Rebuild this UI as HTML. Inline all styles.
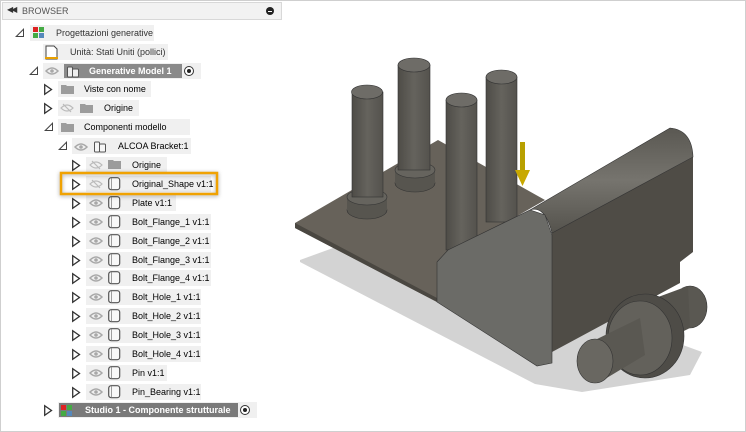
<!DOCTYPE html>
<html><head><meta charset="utf-8"><style>
*{margin:0;padding:0;box-sizing:border-box}
body{width:746px;height:432px;background:#fff;position:relative;overflow:hidden;font-family:"Liberation Sans",sans-serif;font-size:9px;color:#333}
#frame{position:absolute;left:0;top:0;width:746px;height:432px;border:1px solid #cfcfcf}
#hdr{position:absolute;left:2px;top:2px;width:280px;height:18px;background:#f2f2f2;border:1px solid #d8d8d8}
</style></head><body>
<div id="frame"></div>
<div id="hdr">
 <span style="position:absolute;left:4px;top:2px;font-size:8px;color:#333;letter-spacing:-2px">◀◀</span>
 <span style="position:absolute;left:19px;top:3px;font-size:9px;color:#555">BROWSER</span>
 <span style="position:absolute;left:263px;top:4px;width:8px;height:8px;border-radius:50%;background:#222"></span>
 <span style="position:absolute;left:265px;top:7.5px;width:4px;height:1px;background:#fff"></span>
</div>

<svg width="746" height="432" style="position:absolute;left:0;top:0" font-family="Liberation Sans" font-size="9">
<defs>
<linearGradient id="cyl" x1="0" x2="1" y1="0" y2="0"><stop offset="0" stop-color="#4e4c47"/><stop offset="0.5" stop-color="#65635d"/><stop offset="1" stop-color="#54524d"/></linearGradient>
<linearGradient id="topr" x1="0" x2="0" y1="0" y2="1"><stop offset="0" stop-color="#5a5852"/><stop offset="0.5" stop-color="#76746e"/><stop offset="1" stop-color="#55534d"/></linearGradient>
<g id="open"><path d="M0 9 L9 0 L9 9 Z" fill="#444"/><path d="M2.5 8 L8 2.5 L8 8Z" fill="#fff"/></g>
<g id="closed"><path d="M0.7 0.7 L0.7 10.3 L7.5 5.5 Z" fill="#fff" stroke="#333" stroke-width="1.3"/></g>
<g id="eye"><path d="M0 4 Q6 -2 12 4 Q6 10 0 4Z" fill="none" stroke="#a8a8a8" stroke-width="1.5"/><circle cx="6" cy="4" r="1.8" fill="#a8a8a8"/></g>
<g id="eyex"><path d="M0 4 Q6 -2 12 4 Q6 10 0 4Z" fill="none" stroke="#bbb" stroke-width="1.2"/><line x1="2" y1="0" x2="10" y2="8" stroke="#bbb" stroke-width="1.2"/></g>
<g id="fold"><path d="M0 1 H5 L6 2 H13 V10 H0Z" fill="#9c9c9c"/></g>
<g id="comp"><rect x="0.7" y="0.7" width="11" height="12" rx="2.5" fill="#f8f8f8" stroke="#555" stroke-width="1.2"/><path d="M3.5 1 V12.5" stroke="#888" stroke-width="0.8"/></g>
<g id="gen"><rect x="0" y="0" width="5" height="5" fill="#d22"/><rect x="6" y="0" width="5" height="5" fill="#4a4"/><rect x="0" y="6" width="5" height="5" fill="#4a4"/><rect x="6" y="6" width="5" height="5" fill="#58b"/></g>
<g id="radio"><circle cx="5" cy="5" r="4.5" fill="#fff" stroke="#333" stroke-width="1"/><circle cx="5" cy="5" r="2" fill="#222"/></g>
</defs>

<g fill="#f0f0f0">
<rect x="30" y="25" width="124" height="16"/>
<rect x="43" y="44" width="125" height="16"/>
<rect x="43" y="63" width="158" height="16"/>
<rect x="58" y="81" width="93" height="16"/>
<rect x="58" y="100" width="81" height="16"/>
<rect x="58" y="119" width="132" height="16"/>
<rect x="72" y="138" width="119" height="16"/>
<rect x="86" y="157" width="81" height="16"/>
<rect x="86" y="176" width="125" height="16"/>
<rect x="86" y="195" width="90" height="16"/>
<rect x="86" y="214" width="125" height="16"/>
<rect x="86" y="233" width="125" height="16"/>
<rect x="86" y="252" width="125" height="16"/>
<rect x="86" y="270" width="125" height="16"/>
<rect x="86" y="289" width="115" height="16"/>
<rect x="86" y="308" width="115" height="16"/>
<rect x="86" y="327" width="115" height="16"/>
<rect x="86" y="346" width="115" height="16"/>
<rect x="86" y="365" width="81" height="16"/>
<rect x="86" y="384" width="115" height="16"/>
<rect x="58" y="402" width="199" height="16"/>
</g>

<use href="#open" x="15" y="28"/><use href="#gen" x="33" y="27"/>
<text x="56" y="36" fill="#333">Progettazioni generative</text>
<path d="M46 46 H54 L57 49 V59 H46Z" fill="#fff" stroke="#444" stroke-width="1"/><rect x="45" y="57" width="13" height="2" fill="#e8a000"/>
<text x="70" y="55" fill="#333">Unità: Stati Uniti (pollici)</text>
<use href="#open" x="29" y="66"/><use href="#eye" x="46" y="67"/>
<rect x="64" y="64" width="118" height="14" fill="#8a8a8a"/>
<g transform="translate(67,65)"><rect x="0.5" y="2" width="5" height="10" rx="1" fill="#eee" stroke="#555"/><rect x="5.5" y="4" width="6" height="8" rx="1" fill="#eee" stroke="#555"/></g>
<text x="89" y="74" fill="#fff" font-weight="bold">Generative Model 1</text>
<use href="#radio" x="184" y="66"/>
<use href="#closed" x="44" y="84"/><use href="#fold" x="61" y="84"/>
<text x="84" y="92">Viste con nome</text>
<use href="#closed" x="44" y="103"/><use href="#eyex" x="61" y="104"/><use href="#fold" x="80" y="103"/>
<text x="104" y="111">Origine</text>
<use href="#open" x="44" y="122"/><use href="#fold" x="61" y="122"/>
<text x="84" y="130">Componenti modello</text>
<use href="#open" x="58" y="141"/><use href="#eye" x="75" y="143"/>
<g transform="translate(94,140)"><rect x="0.5" y="2" width="5" height="10" rx="1" fill="#f6f6f6" stroke="#555"/><rect x="5.5" y="4" width="6" height="8" rx="1" fill="#f6f6f6" stroke="#555"/></g>
<text x="118" y="149">ALCOA Bracket:1</text>
<use href="#closed" x="72" y="160"/><use href="#eyex" x="90" y="161"/><use href="#fold" x="108" y="159"/>
<text x="132" y="168">Origine</text>

<use href="#closed" x="72" y="179"/><use href="#eyex" x="90" y="180"/><use href="#comp" x="108" y="177"/><text x="132" y="187">Original_Shape v1:1</text>
<use href="#closed" x="72" y="198"/><use href="#eye" x="90" y="199"/><use href="#comp" x="108" y="196"/><text x="132" y="206">Plate v1:1</text>
<use href="#closed" x="72" y="217"/><use href="#eye" x="90" y="218"/><use href="#comp" x="108" y="215"/><text x="132" y="225">Bolt_Flange_1 v1:1</text>
<use href="#closed" x="72" y="236"/><use href="#eye" x="90" y="237"/><use href="#comp" x="108" y="234"/><text x="132" y="244">Bolt_Flange_2 v1:1</text>
<use href="#closed" x="72" y="255"/><use href="#eye" x="90" y="256"/><use href="#comp" x="108" y="253"/><text x="132" y="263">Bolt_Flange_3 v1:1</text>
<use href="#closed" x="72" y="273"/><use href="#eye" x="90" y="274"/><use href="#comp" x="108" y="271"/><text x="132" y="281">Bolt_Flange_4 v1:1</text>
<use href="#closed" x="72" y="292"/><use href="#eye" x="90" y="293"/><use href="#comp" x="108" y="290"/><text x="132" y="300">Bolt_Hole_1 v1:1</text>
<use href="#closed" x="72" y="311"/><use href="#eye" x="90" y="312"/><use href="#comp" x="108" y="309"/><text x="132" y="319">Bolt_Hole_2 v1:1</text>
<use href="#closed" x="72" y="330"/><use href="#eye" x="90" y="331"/><use href="#comp" x="108" y="328"/><text x="132" y="338">Bolt_Hole_3 v1:1</text>
<use href="#closed" x="72" y="349"/><use href="#eye" x="90" y="350"/><use href="#comp" x="108" y="347"/><text x="132" y="357">Bolt_Hole_4 v1:1</text>
<use href="#closed" x="72" y="368"/><use href="#eye" x="90" y="369"/><use href="#comp" x="108" y="366"/><text x="132" y="376">Pin v1:1</text>
<use href="#closed" x="72" y="387"/><use href="#eye" x="90" y="388"/><use href="#comp" x="108" y="385"/><text x="132" y="395">Pin_Bearing v1:1</text>
<use href="#closed" x="44" y="405"/>
<rect x="59" y="403" width="179" height="14" fill="#7a7a7a"/>
<use href="#gen" x="61" y="405"/>
<text x="85" y="413" fill="#fff" font-weight="bold">Studio 1 - Componente strutturale</text>
<use href="#radio" x="240" y="405"/>

<rect x="61" y="173" width="156" height="21" fill="none" stroke="#f0a202" stroke-width="2.5" style="filter:drop-shadow(0 1px 2px rgba(0,0,0,.35))"/>

<!-- 3D model -->
<polygon points="300,260 355,240 560,300 702,352 690,375 582,392 535,384 300,262" fill="#d3d3d3"/>
<polygon points="295,223 438,140 545,200 437,262 437,302 295,228" fill="#67625a"/>
<polygon points="295,223 437,298 437,302 295,228" fill="#4a4741"/>
<g stroke="#333" stroke-width="0.6">
<ellipse cx="367" cy="210" rx="20" ry="9" fill="#57554f"/><rect x="347" y="197" width="40" height="13" fill="#57554f" stroke="none"/><ellipse cx="367" cy="197" rx="20" ry="8" fill="#66645e"/>
<rect x="352" y="92" width="31" height="105" fill="url(#cyl)"/><ellipse cx="367" cy="92" rx="15.5" ry="7" fill="#6e6c67"/>
<ellipse cx="415" cy="183" rx="20" ry="9" fill="#57554f"/><rect x="395" y="170" width="40" height="13" fill="#57554f" stroke="none"/><ellipse cx="415" cy="170" rx="20" ry="8" fill="#66645e"/>
<rect x="398" y="65" width="32" height="105" fill="url(#cyl)"/><ellipse cx="414" cy="65" rx="16" ry="7" fill="#6e6c67"/>
<rect x="446" y="100" width="31" height="150" fill="url(#cyl)"/><ellipse cx="461.5" cy="100" rx="15.5" ry="7" fill="#6e6c67"/>
<rect x="486" y="77" width="31" height="145" fill="url(#cyl)"/><ellipse cx="501.5" cy="77" rx="15.5" ry="7" fill="#6e6c67"/>
</g>
<rect x="520" y="142" width="5" height="28" fill="#b8a000"/><polygon points="515,170 530,170 522.5,186" fill="#c8a800"/>
<polygon points="552,233 693,157 693,252 680,262 680,283 552,352 537,365" fill="#4f4c46"/>
<path d="M530,210 Q545,205 552,233 L693,157 Q692,130 670,128 Z" fill="url(#topr)" stroke="#333" stroke-width="0.6"/>
<polygon points="437,262 448,250 530,210 545,215 552,235 552,363 537,366 437,302" fill="#6b6b67" stroke="#333" stroke-width="0.6"/>
<g stroke="#333" stroke-width="0.6">
<ellipse cx="690" cy="307" rx="17" ry="21" fill="#5a5852"/>
<polygon points="650,300 688,286 690,328 655,345" fill="#55534d" stroke="none"/>
<ellipse cx="645" cy="336" rx="39" ry="42" fill="#4e4c47"/>
<ellipse cx="640" cy="338" rx="32" ry="37" fill="#63615b"/>
<polygon points="595,340 640,318 645,355 600,382" fill="#5a5852" stroke="none"/>
<ellipse cx="595" cy="361" rx="18" ry="22" fill="#696761"/>
</g>
</svg>
</body></html>
